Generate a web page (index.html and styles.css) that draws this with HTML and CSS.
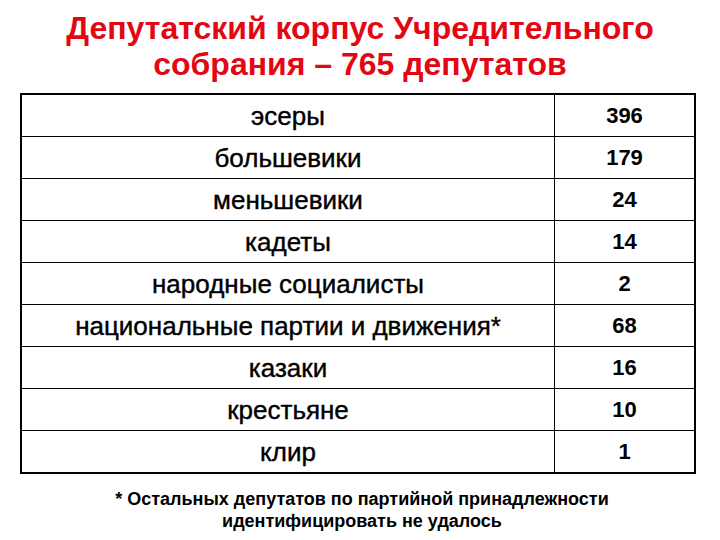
FILE: index.html
```html
<!DOCTYPE html>
<html lang="ru">
<head>
<meta charset="utf-8">
<link rel="stylesheet" href="styles.css">
</head>
<body>
<div class="page">
  <h1 class="title">Депутатский корпус Учредительного<br>собрания – 765 депутатов</h1>
  <table class="tbl">
    <tr><td class="name">эсеры</td><td class="num">396</td></tr>
    <tr><td class="name">большевики</td><td class="num">179</td></tr>
    <tr><td class="name">меньшевики</td><td class="num">24</td></tr>
    <tr><td class="name">кадеты</td><td class="num">14</td></tr>
    <tr><td class="name">народные социалисты</td><td class="num">2</td></tr>
    <tr><td class="name">национальные партии и движения*</td><td class="num">68</td></tr>
    <tr><td class="name">казаки</td><td class="num">16</td></tr>
    <tr><td class="name">крестьяне</td><td class="num">10</td></tr>
    <tr><td class="name">клир</td><td class="num">1</td></tr>
  </table>
  <p class="note">* Остальных депутатов по партийной принадлежности<br>идентифицировать не удалось</p>
</div>
</body>
</html>
```
FILE: styles.css
```css
html, body {
  margin: 0;
  padding: 0;
  background: #ffffff;
}
.page {
  width: 720px;
  height: 540px;
  font-family: "Liberation Sans", Arial, sans-serif;
  overflow: hidden;
}
.title {
  margin: 0;
  padding-top: 10px;
  height: 74px;
  text-align: center;
  color: #e30613;
  font-size: 32px;
  font-weight: bold;
  line-height: 36px;
}
.tbl {
  margin: 9px 0 0 20px;
  width: 676px;
  border-collapse: collapse;
  border: 2px solid #000;
}
.tbl td {
  height: 41px;
  padding: 0;
  border-top: 1px solid #000;
  text-align: center;
  font-size: 26px;
  line-height: 30px;
  color: #000;
}
.tbl .name {
  width: 532px;
  border-right: 1px solid #000;
  -webkit-text-stroke: 0.4px #000;
}
.tbl .num {
  font-size: 22px;
  font-weight: bold;
}
.note {
  margin: 14px 0 0 0;
  text-align: center;
  font-size: 18px;
  font-weight: bold;
  line-height: 22px;
  color: #000;
  padding-left: 4px;
}
```
